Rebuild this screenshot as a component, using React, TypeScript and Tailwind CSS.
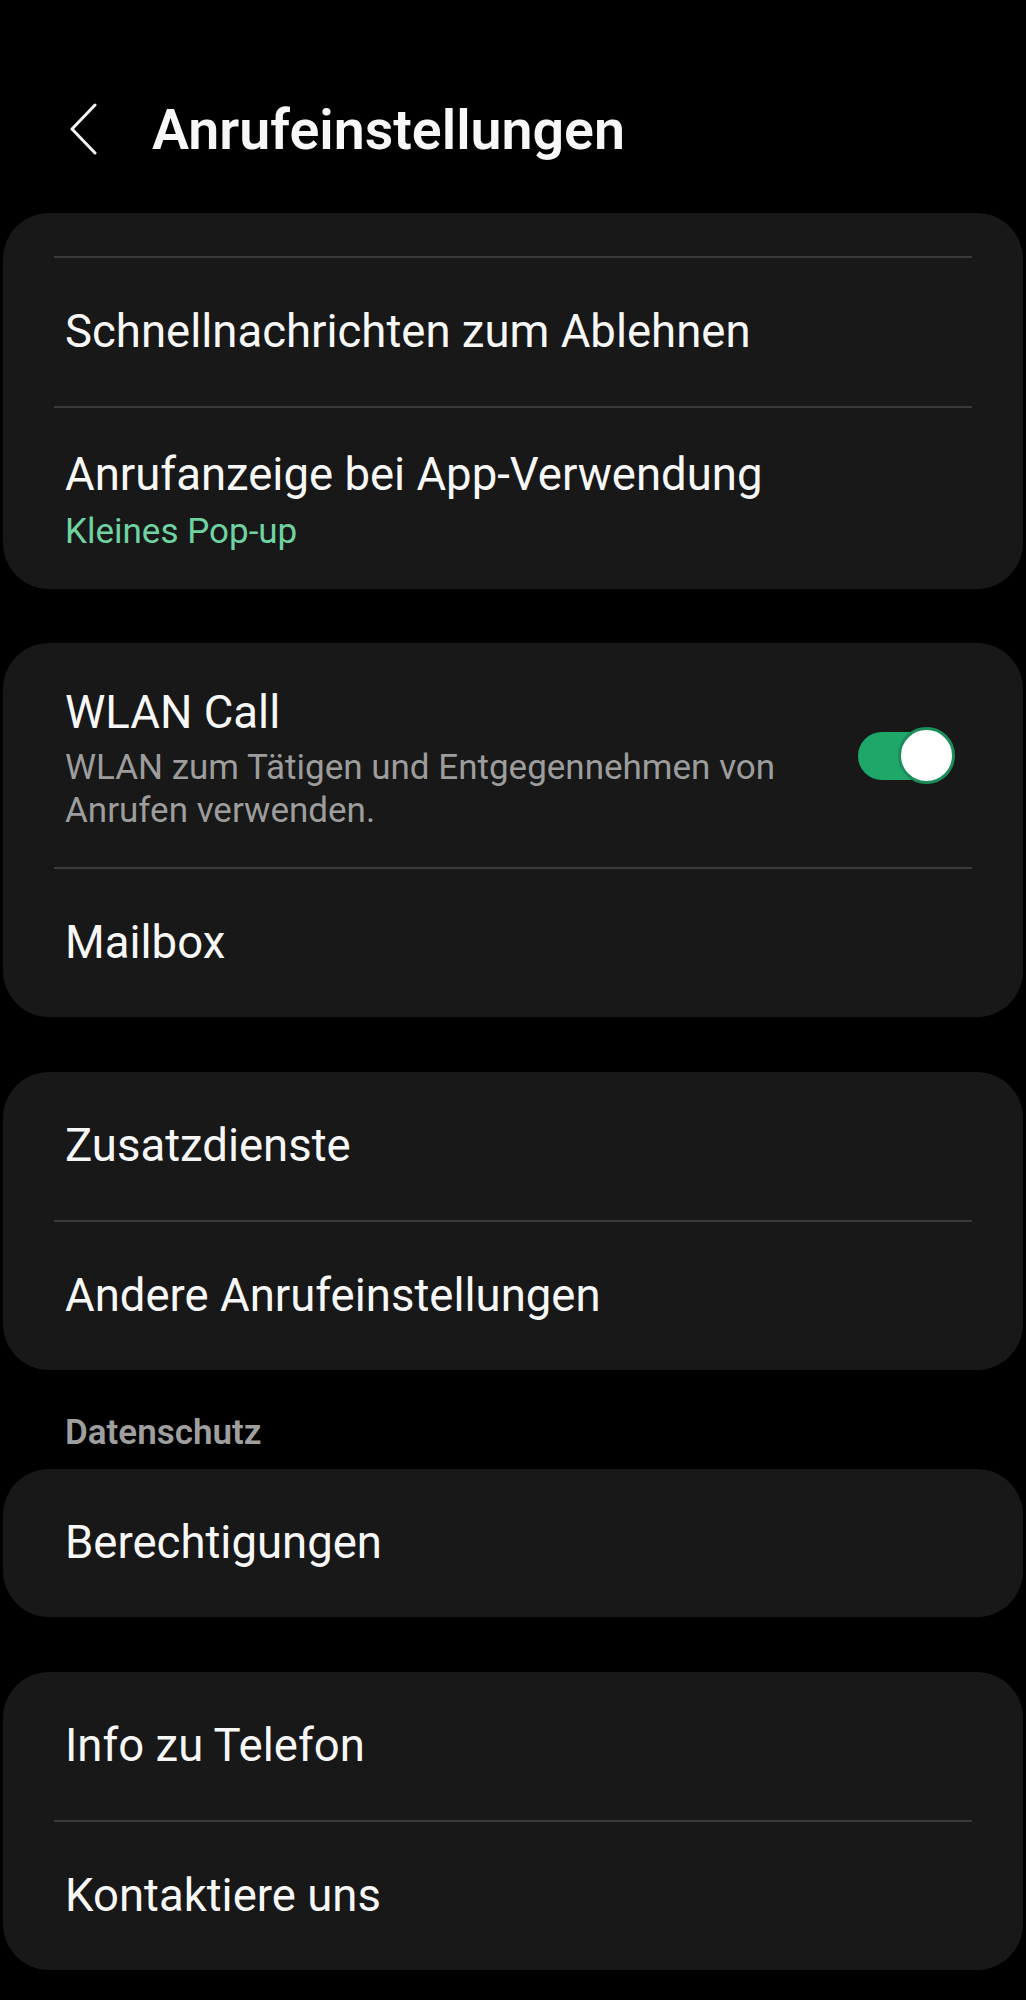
import React from "react";

const Divider = () => <div className="mx-[51px] h-[2px] bg-[#3a3a3a]" />;

const Row = ({ title }: { title: string }) => (
  <div className="flex h-[148px] items-center pl-[62px] pr-[68px]">
    <span className="text-[45.5px] leading-[54px] text-[#f7f7f7]">{title}</span>
  </div>
);

const Card = ({ children }: { children: React.ReactNode }) => (
  <div className="mx-[3px] overflow-hidden rounded-[46px] bg-[#181818]">{children}</div>
);

const Toggle = () => (
  <div className="relative mb-[8px] h-[57px] w-[97px] shrink-0">
    <div className="absolute left-0 top-[5px] h-[48px] w-[92px] rounded-full bg-[#1fa76a]" />
    <div className="absolute right-0 top-0 h-[57px] w-[57px] rounded-full border-[3px] border-[#1b8d5b] bg-white" />
  </div>
);

export default function App() {
  return (
    <div
      className="min-h-[2000px] w-full bg-black pt-[99px]"
      style={{ fontFamily: "Roboto, 'Noto Sans', sans-serif" }}
    >
      {/* Header */}
      <div className="flex h-[64px] items-center">
        <svg
          className="ml-[69px] -mt-[4px]"
          width="30"
          height="52"
          viewBox="0 0 30 52"
          fill="none"
        >
          <path
            d="M26 2 L3 26 L26 50"
            stroke="#f5f5f5"
            strokeWidth="3"
            strokeLinecap="round"
            strokeLinejoin="round"
          />
        </svg>
        <h1 className="ml-[53px] text-[55.5px] font-semibold leading-[64px] text-[#f7f7f7]">
          Anrufeinstellungen
        </h1>
      </div>

      <div className="mt-[50px] flex flex-col">
        {/* Card 1 */}
        <Card>
          <div className="h-[43px]" />
          <Divider />
          <Row title="Schnellnachrichten zum Ablehnen" />
          <Divider />
          <div className="flex flex-col pl-[62px] pr-[68px] pt-[40px] pb-[36px]">
            <span className="text-[45.5px] leading-[54px] text-[#f7f7f7]">
              Anrufanzeige bei App-Verwendung
            </span>
            <span className="mt-[9px] text-[35px] leading-[42px] text-[#6fd3a1]">
              Kleines Pop-up
            </span>
          </div>
        </Card>

        {/* Card 2 */}
        <div className="mt-[54px]">
          <Card>
            <div className="flex items-center pl-[62px] pr-[68px] pt-[43px] pb-[35px]">
              <div className="flex flex-1 flex-col">
                <span className="text-[45.5px] leading-[54px] text-[#f7f7f7]">WLAN Call</span>
                <span className="mt-[6px] max-w-[740px] text-[35px] leading-[43px] text-[#9d9d9d]">
                  WLAN zum Tätigen und Entgegennehmen von Anrufen verwenden.
                </span>
              </div>
              <Toggle />
            </div>
            <Divider />
            <Row title="Mailbox" />
          </Card>
        </div>

        {/* Card 3 */}
        <div className="mt-[55px]">
          <Card>
            <Row title="Zusatzdienste" />
            <Divider />
            <Row title="Andere Anrufeinstellungen" />
          </Card>
        </div>

        {/* Section header */}
        <div className="mt-[43px] mb-[16px] pl-[65px] text-[35px] font-semibold leading-[40px] text-[#9f9f9f]">
          Datenschutz
        </div>

        {/* Card 4 */}
        <Card>
          <Row title="Berechtigungen" />
        </Card>

        {/* Card 5 */}
        <div className="mt-[55px]">
          <Card>
            <Row title="Info zu Telefon" />
            <Divider />
            <Row title="Kontaktiere uns" />
          </Card>
        </div>
      </div>
    </div>
  );
}
